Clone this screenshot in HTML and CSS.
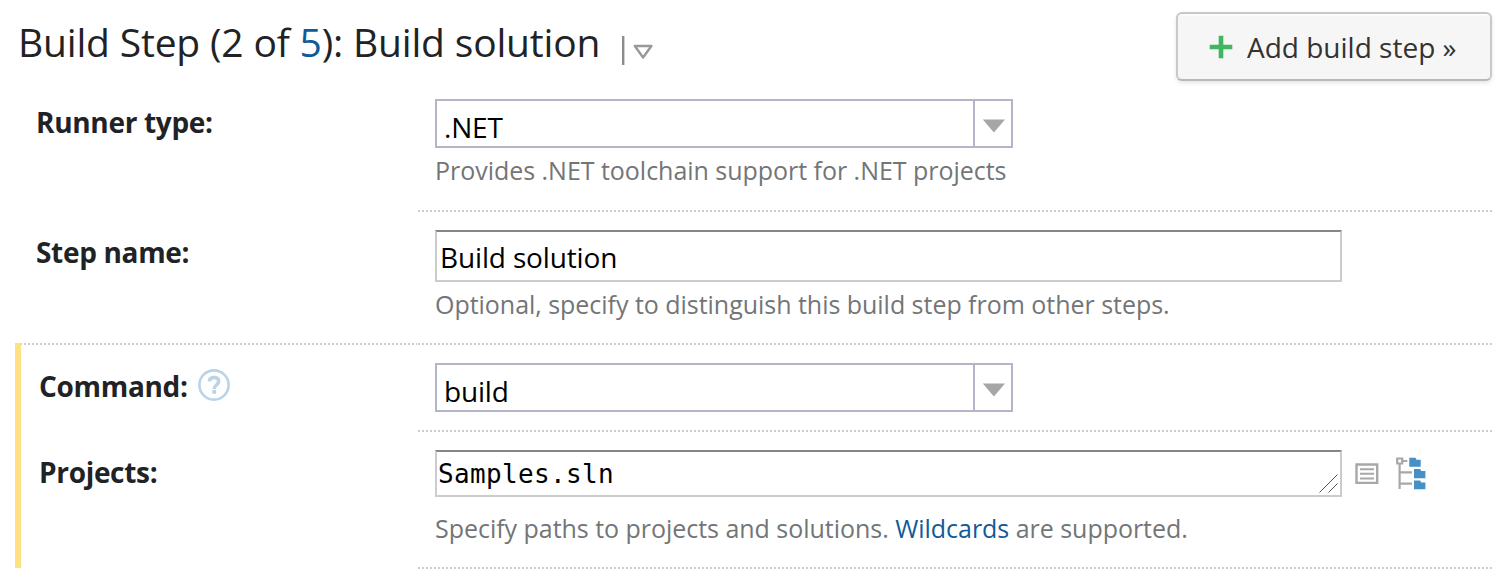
FILE: index.html
```html
<!DOCTYPE html>
<html lang="en">
<head>
<meta charset="utf-8">
<title>Build Step</title>
<link rel="stylesheet" href="styles.css">
</head>
<body>
<header class="header">
  <h1 class="title">Build Step (2 of <a class="link">5</a>): Build solution</h1>
  <svg class="title-menu" width="32" height="32" viewBox="0 0 32 32">
    <path d="M2.2 1v29" stroke="#8c8c8c" stroke-width="2.4"/>
    <path d="M13.8 11h16.6l-8.3 11.5z" fill="none" stroke="#999" stroke-width="2.4" stroke-linejoin="round"/>
  </svg>
  <button class="add-step">
    <svg width="24" height="24" viewBox="0 0 24 24"><path d="M12 .7v22.6M.7 12h22.6" stroke="#3fb65f" stroke-width="4.6"/></svg>
    <span>Add build step »</span>
  </button>
</header>
<main class="form">
  <div class="row first">
    <div class="label">Runner type:</div>
    <div class="cell">
      <div class="select"><span class="value">.NET</span><span class="arrow"><svg width="24" height="14" viewBox="0 0 24 14"><path d="M.8.5h22.2L11.9 13.5z" fill="#a6a6a6"/></svg></span></div>
      <div class="hint">Provides .NET toolchain support for .NET projects</div>
    </div>
  </div>
  <div class="row name">
    <div class="label">Step name:</div>
    <div class="cell">
      <div class="input">Build solution</div>
      <div class="hint">Optional, specify to distinguish this build step from other steps.</div>
    </div>
  </div>
  <section class="group">
    <div class="row command">
      <div class="label">Command:
        <svg class="help" width="32" height="32" viewBox="0 0 32 32" fill="none" stroke="#bad3e7">
          <circle cx="16" cy="16" r="14.6" stroke-width="2.6"/>
          <path d="M11.3 12.4C11.5 9.9 13.2 8.5 16 8.5c2.9 0 4.7 1.4 4.7 3.8 0 3.6-4.6 3.8-4.6 7.7" stroke-width="3.5"/>
          <path d="M14.3 22.9h3.8" stroke-width="3.8"/>
        </svg>
      </div>
      <div class="cell">
        <div class="select"><span class="value">build</span><span class="arrow"><svg width="24" height="14" viewBox="0 0 24 14"><path d="M.8.5h22.2L11.9 13.5z" fill="#a6a6a6"/></svg></span></div>
      </div>
    </div>
    <div class="row projects">
      <div class="label">Projects:</div>
      <div class="cell">
        <div class="area-line">
          <div class="area">Samples.sln<svg class="grip" width="19" height="19" viewBox="0 0 19 19"><path d="M.5 18.5l18-18M9.5 18.5l9-9" stroke="#555" stroke-width="1"/></svg></div>
          <svg class="list-icon" width="24" height="22" viewBox="0 0 24 22" fill="none" stroke="#a8a8a8">
            <path d="M1.5 1.5h20.7v18.4H1.5z" stroke-width="2.4"/>
            <path d="M5 6.2h14M5 10.8h14M5 15.4h14" stroke-width="2"/>
          </svg>
          <svg class="tree-icon" width="30" height="33" viewBox="0 0 30 33">
            <g fill="none" stroke="#a8a8a8" stroke-width="2.2">
              <path d="M1.2 1.5h5v5h-5zM6.5 4h4.8M3.6 7v25M4 15.3h12M4 26.6h12"/>
            </g>
            <path fill="#4790c6" d="M13.3.7h6.2l1 2h4.2v7.1H13.3zM18 12.1h6.2l1 2h4.2v7.1H18zM18 23.4h6.2l1 2h4.2v6.9H18z"/>
          </svg>
        </div>
        <div class="hint">Specify paths to projects and solutions. <a class="link">Wildcards</a> are supported.</div>
      </div>
    </div>
  </section>
</main>
</body>
</html>
```
FILE: styles.css
```css
* { box-sizing: border-box; }
body {
  margin: 0;
  height: 580px;
  overflow: hidden;
  background: #fff;
  color: #1f2326;
  font: 28px "Open Sans", "Noto Sans", sans-serif;
}
svg { display: block; flex: none; }
.link { color: #0f5b99; text-decoration: none; }

.header {
  display: flex;
  align-items: flex-start;
  height: 99px;
  padding: 0 11px 0 18px;
}
.title {
  margin: 0;
  font-size: 39px;
  font-weight: 400;
  line-height: 84px;
  letter-spacing: -0.18px;
  white-space: nowrap;
}
.title-menu { margin: 35px 0 0 21px; }
.add-step {
  display: flex;
  align-items: center;
  width: 316px;
  height: 69px;
  margin: 12px 0 0 auto;
  padding: 0 0 0 31px;
  gap: 14px;
  background: #f6f6f6;
  border: 2px solid #c9c9c9;
  border-bottom-color: #b8b8b8;
  border-radius: 6px;
  box-shadow: 0 2px 4px rgba(0, 0, 0, 0.1), inset 0 2px 0 #fbfbfb;
  color: #333;
  font: inherit;
  line-height: 63px;
  white-space: nowrap;
}
.add-step span { padding-top: 2px; }

.row {
  display: grid;
  grid-template-columns: 396px 1075px;
  margin-left: 21px;
}
.label {
  display: flex;
  align-items: flex-start;
  padding: 0 0 0 15px;
  font-weight: 700;
  line-height: 47px;
  letter-spacing: -0.32px;
}
.cell { padding-left: 18px; }
.first { height: 111px; }
.name { height: 133px; }
.command { height: 87px; }
.projects { height: 139px; }

/* 2px square dots, tiled every 4px */
.name .cell,
.command .cell,
.projects .cell {
  padding-top: 20px;
  background: linear-gradient(90deg, #fff 1px, #ccc 1px 3px, #fff 3px) 0 0 / 4px 2px repeat-x;
}
.command .label {
  background: linear-gradient(90deg, #ccc 1px, #fff 1px 3px, #ccc 3px) 0 0 / 4px 2px repeat-x;
}
.projects .cell {
  background:
    linear-gradient(90deg, #fff 1px, #ccc 1px 3px, #fff 3px) 0 0 / 4px 2px repeat-x,
    linear-gradient(90deg, #fff 1px, #ccc 1px 3px, #fff 3px) 0 100% / 4px 2px repeat-x;
}
.name .label,
.projects .label { padding-top: 19px; }
.command .label { padding-top: 20px; }
.command .label,
.projects .label { padding-left: 18px; }

.group {
  height: 225px;
  margin-left: 15px;
  border-left: 6px solid #ffe082;
}
.group .row { margin-left: 0; }
.help { margin: 6px 0 0 10px; }

.select {
  display: flex;
  width: 578px;
  height: 49px;
  border: 2px solid #b4b5c9;
  color: #000;
}
.value {
  flex: 1;
  padding: 4px 0 0 7px;
  line-height: 45px;
  letter-spacing: -0.2px;
}
.arrow {
  width: 38px;
  padding: 18px 0 0 7px;
  border-left: 2px solid #b4b5c9;
}
.hint {
  margin-top: 4px;
  color: #737577;
  font-size: 25px;
  line-height: 36px;
  letter-spacing: -0.03px;
  white-space: nowrap;
}
.input,
.area {
  width: 907px;
  border: 2px solid #ccc;
  border-top-color: #858585;
  color: #000;
}
.input {
  height: 52px;
  padding: 1px 0 0 3px;
  line-height: 48px;
  letter-spacing: -0.15px;
}
.area-line { display: flex; }
.area {
  position: relative;
  height: 47px;
  padding-left: 1px;
  font: 26px/45px "DejaVu Sans Mono", "Liberation Mono", monospace;
  letter-spacing: 0.35px;
}
.grip { position: absolute; right: 2px; bottom: 2px; }
.list-icon { margin: 13px 0 0 13px; }
.tree-icon { margin: 7px 0 0 17px; }
.projects .hint { margin-top: 13px; }
```
